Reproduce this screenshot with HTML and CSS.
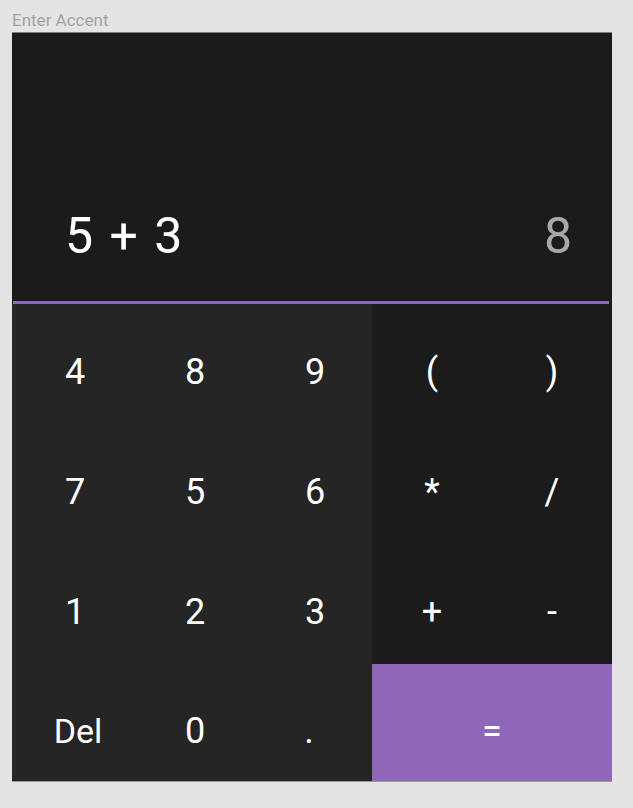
FILE: index.html
```html
<!DOCTYPE html>
<html>
<head>
<meta charset="utf-8">
<link rel="stylesheet" href="styles.css">
</head>
<body>
<div class="label">Enter Accent</div>
<div class="calc">
  <div class="display">
    <div class="expr">5 + 3</div>
    <div class="result">8</div>
  </div>
  <div class="accent-line"></div>
  <div class="keypad">
    <div class="key num">4</div>
    <div class="key num">8</div>
    <div class="key num">9</div>
    <div class="key op">(</div>
    <div class="key op">)</div>
    <div class="key num">7</div>
    <div class="key num">5</div>
    <div class="key num">6</div>
    <div class="key op">*</div>
    <div class="key op">/</div>
    <div class="key num">1</div>
    <div class="key num">2</div>
    <div class="key num">3</div>
    <div class="key op">+</div>
    <div class="key op">-</div>
    <div class="key num del">Del</div>
    <div class="key num">0</div>
    <div class="key num dot">.</div>
    <div class="key equals">=</div>
  </div>
</div>
</body>
</html>
```

FILE: styles.css
```css
* { box-sizing: border-box; }
html, body {
  margin: 0;
  padding: 0;
  background: #e4e4e4;
  font-family: Roboto, "Liberation Sans", sans-serif;
}
.label {
  height: 32px;
  padding: 10px 0 0 12px;
  font-size: 17px;
  line-height: 20px;
  color: #a3a3a3;
}
.calc {
  width: 600px;
  margin-left: 12px;
  background: #1b1b1b;
  border-top: 1px solid #7a7a7a;
  border-bottom: 1px solid #9a9a9a;
}
.display {
  height: 268px;
  display: flex;
  align-items: flex-end;
  justify-content: space-between;
  padding: 0 40px 35px 53px;
  font-size: 50px;
  line-height: 60px;
}
.expr { color: #ffffff; word-spacing: 4px; }
.result { color: #a8a8a8; }
.accent-line {
  height: 3px;
  margin: 0 3px 0 1px;
  background: #8e67b9;
}
.keypad {
  display: grid;
  grid-template-columns: repeat(5, 120px);
  grid-template-rows: 120px 120px 120px 117px;
}
.key {
  display: flex;
  align-items: center;
  justify-content: center;
  padding-top: 16px;
  color: #ffffff;
  font-size: 36px;
}
.num {
  background: #252525;
  padding-left: 6px;
}
.del { font-size: 34px; padding-left: 12px; }
.dot { padding-left: 0; padding-right: 6px; }
.op { background: #1b1b1b; }
.equals {
  grid-column: span 2;
  background: #8e67b9;
}
```
